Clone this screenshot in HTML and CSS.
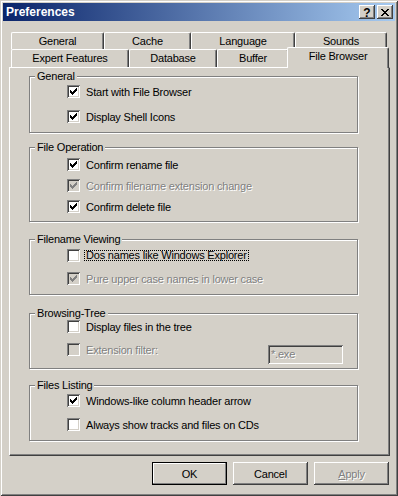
FILE: index.html
```html
<!DOCTYPE html>
<html>
<head>
<meta charset="utf-8">
<title>Preferences</title>
<link rel="stylesheet" href="styles.css">
</head>
<body>
<div class="window">
  <div class="titlebar">
    <span class="title">Preferences</span>
    <div class="caption-buttons">
      <div class="cbtn help">?</div>
      <div class="cbtn">
        <svg width="8" height="7" viewBox="0 0 8 7" shape-rendering="crispEdges"><path fill="#000" d="M0 0h2v1H0zM6 0h2v1H6zM1 1h2v1H1zM5 1h2v1H5zM2 2h4v1H2zM3 3h2v1H3zM2 4h4v1H2zM1 5h2v1H1zM5 5h2v1H5zM0 6h2v1H0zM6 6h2v1H6z"/></svg>
      </div>
    </div>
  </div>

  <div class="content">
    <div class="tabs">
      <div class="tab-row back">
        <div class="tab t-general">General</div>
        <div class="tab t-cache">Cache</div>
        <div class="tab t-language">Language</div>
        <div class="tab t-sounds">Sounds</div>
      </div>
      <div class="tab-row front">
        <div class="tab t-expert">Expert Features</div>
        <div class="tab t-database">Database</div>
        <div class="tab t-buffer">Buffer</div>
        <div class="tab t-browser selected">File Browser</div>
      </div>
    </div>

    <div class="panel">
      <fieldset class="group g-general">
        <legend>General</legend>
        <div class="row"><span class="cb"><svg class="check" width="7" height="7" viewBox="0 0 7 7" shape-rendering="crispEdges"><path d="M0 2h1v3H0zM1 3h1v3H1zM2 4h1v3H2zM3 3h1v3H3zM4 2h1v3H4zM5 1h1v3H5zM6 0h1v3H6z"/></svg></span><span class="label">Start with File Browser</span></div>
        <div class="row"><span class="cb"><svg class="check" width="7" height="7" viewBox="0 0 7 7" shape-rendering="crispEdges"><path d="M0 2h1v3H0zM1 3h1v3H1zM2 4h1v3H2zM3 3h1v3H3zM4 2h1v3H4zM5 1h1v3H5zM6 0h1v3H6z"/></svg></span><span class="label">Display Shell Icons</span></div>
      </fieldset>

      <fieldset class="group g-fileop">
        <legend>File Operation</legend>
        <div class="row"><span class="cb"><svg class="check" width="7" height="7" viewBox="0 0 7 7" shape-rendering="crispEdges"><path d="M0 2h1v3H0zM1 3h1v3H1zM2 4h1v3H2zM3 3h1v3H3zM4 2h1v3H4zM5 1h1v3H5zM6 0h1v3H6z"/></svg></span><span class="label">Confirm rename file</span></div>
        <div class="row disabled"><span class="cb"><svg class="check" width="7" height="7" viewBox="0 0 7 7" shape-rendering="crispEdges"><path d="M0 2h1v3H0zM1 3h1v3H1zM2 4h1v3H2zM3 3h1v3H3zM4 2h1v3H4zM5 1h1v3H5zM6 0h1v3H6z"/></svg></span><span class="label">Confirm filename extension change</span></div>
        <div class="row"><span class="cb"><svg class="check" width="7" height="7" viewBox="0 0 7 7" shape-rendering="crispEdges"><path d="M0 2h1v3H0zM1 3h1v3H1zM2 4h1v3H2zM3 3h1v3H3zM4 2h1v3H4zM5 1h1v3H5zM6 0h1v3H6z"/></svg></span><span class="label">Confirm delete file</span></div>
      </fieldset>

      <fieldset class="group g-viewing">
        <legend>Filename Viewing</legend>
        <div class="row"><span class="cb"></span><span class="label focus">Dos names like Windows Explorer</span></div>
        <div class="row disabled"><span class="cb"><svg class="check" width="7" height="7" viewBox="0 0 7 7" shape-rendering="crispEdges"><path d="M0 2h1v3H0zM1 3h1v3H1zM2 4h1v3H2zM3 3h1v3H3zM4 2h1v3H4zM5 1h1v3H5zM6 0h1v3H6z"/></svg></span><span class="label">Pure upper case names in lower case</span></div>
      </fieldset>

      <fieldset class="group g-tree">
        <legend>Browsing-Tree</legend>
        <div class="row lift"><span class="cb"></span><span class="label">Display files in the tree</span></div>
        <div class="row disabled"><span class="cb"></span><span class="label">Extension filter:</span><span class="textbox">*.exe</span></div>
      </fieldset>

      <fieldset class="group g-listing">
        <legend>Files Listing</legend>
        <div class="row"><span class="cb"><svg class="check" width="7" height="7" viewBox="0 0 7 7" shape-rendering="crispEdges"><path d="M0 2h1v3H0zM1 3h1v3H1zM2 4h1v3H2zM3 3h1v3H3zM4 2h1v3H4zM5 1h1v3H5zM6 0h1v3H6z"/></svg></span><span class="label">Windows-like column header arrow</span></div>
        <div class="row"><span class="cb"></span><span class="label">Always show tracks and files on CDs</span></div>
      </fieldset>
    </div>

    <div class="actions">
      <div class="btn default">OK</div>
      <div class="btn">Cancel</div>
      <div class="btn disabled"><u>A</u>pply</div>
    </div>
  </div>
</div>
</body>
</html>
```

FILE: styles.css
```css
* { box-sizing: border-box; }

html, body {
  margin: 0;
  padding: 0;
}

body {
  background: #d4d0c8;
  font-family: "Liberation Sans", Arial, sans-serif;
  font-size: 11px;
  color: #000;
  letter-spacing: -0.2px;
}

.window {
  width: 398px;
  height: 496px;
  padding: 3px;
  background: #d4d0c8;
  box-shadow:
    inset 1px 1px #d4d0c8,
    inset -1px -1px #404040,
    inset 2px 2px #fff,
    inset -2px -2px #808080;
}

/* ---------- title bar ---------- */
.titlebar {
  height: 18px;
  display: flex;
  align-items: center;
  padding: 0 2px 0 3px;
  background: linear-gradient(to right, #0a246a, #a6caf0);
}

.title {
  color: #fff;
  font-weight: bold;
  font-size: 12px;
  letter-spacing: 0;
}

.caption-buttons {
  margin-left: auto;
  display: flex;
  gap: 2px;
}

.cbtn {
  width: 16px;
  height: 14px;
  display: flex;
  align-items: center;
  justify-content: center;
  background: #d4d0c8;
  box-shadow:
    inset -1px -1px #404040,
    inset 1px 1px #fff,
    inset -2px -2px #808080;
}

.cbtn.help {
  font-weight: bold;
  font-size: 12px;
  letter-spacing: 0;
  line-height: 14px;
  padding-top: 1px;
}

/* ---------- content ---------- */
.content {
  padding: 11px 4px 0 6px;
}

.tabs {
  margin-left: 2px;
}

.tab-row {
  display: flex;
}

.tab-row.back { height: 17px; }
.tab-row.front { height: 18px; }

.tab {
  flex: none;
  background: #d4d0c8;
  border-top: 1px solid #fff;
  border-left: 1px solid #fff;
  border-right: 1px solid #404040;
  border-top-left-radius: 2px;
  border-top-right-radius: 2px;
  box-shadow: inset -1px 0 #808080;
  text-align: center;
  white-space: nowrap;
}

.back .tab { height: 17px; line-height: 16px; }
.front .tab { height: 18px; line-height: 17px; }

.t-general { width: 93px; }
.t-cache { width: 87px; }
.t-language { width: 104px; }
.t-sounds { width: 92px; }
.t-expert { width: 118px; }
.t-database { width: 88px; }
.t-buffer { width: 72px; }

.front .tab.selected {
  position: relative;
  z-index: 1;
  width: 102px;
  height: 21px;
  margin-top: -2px;
  margin-left: -2px;
  line-height: 17px;
}

/* ---------- panel ---------- */
.panel {
  width: 381px;
  padding: 1px 0 14px 19px;
  border-top: 1px solid #fff;
  border-left: 1px solid #fff;
  border-right: 1px solid #404040;
  border-bottom: 1px solid #404040;
  box-shadow: inset -1px -1px #808080;
}

.group {
  --gap: 8px;
  width: 329px;
  min-width: 0;
  margin: 0;
  padding: 0 0 7px 5px;
  border: 1px solid #808080;
  box-shadow: inset 1px 1px #fff, 1px 1px #fff;
}

.group legend {
  padding: 0 2px;
  line-height: 14px;
  background: #d4d0c8;
}

.row {
  display: flex;
  align-items: center;
  height: 17px;
  margin-left: 32px;
}

.row + .row { margin-top: var(--gap); }

.g-general { --gap: 8px; padding-top: 0; padding-bottom: 7px; }
.g-fileop { --gap: 4px; margin-top: 7px; padding-top: 2px; padding-bottom: 6px; }
.g-viewing { --gap: 6px; margin-top: 10px; padding-top: 1px; padding-bottom: 7px; }
.g-tree { --gap: 6px; margin-top: 11px; padding-top: 0; padding-bottom: 10px; }
.g-listing { --gap: 7px; margin-top: 9px; padding-top: 0; padding-bottom: 7px; }

.row.lift { margin-top: -2px; }

.cb {
  flex: none;
  width: 13px;
  height: 13px;
  padding: 3px;
  background: #fff;
  box-shadow:
    inset 1px 1px #808080,
    inset -1px -1px #fff,
    inset 2px 2px #404040,
    inset -2px -2px #d4d0c8;
}

.check {
  display: block;
  fill: #000;
}

.label {
  margin-left: 6px;
  white-space: nowrap;
}

.label.focus {
  display: inline-block;
  margin-left: 4px;
  padding: 0 1px;
  line-height: 9px;
  border: 1px dotted #000;
}

.row.disabled .cb { background: #d4d0c8; }
.row.disabled .check { fill: #808080; }
.row.disabled .label {
  color: #808080;
  text-shadow: 1px 1px #fff;
}

.textbox {
  flex: none;
  align-self: flex-start;
  width: 75px;
  height: 19px;
  margin: 4px 14px 0 auto;
  padding: 2px 3px;
  line-height: 14px;
  background: #d4d0c8;
  color: #808080;
  text-shadow: 1px 1px #fff;
  box-shadow:
    inset 1px 1px #808080,
    inset -1px -1px #fff,
    inset 2px 2px #404040,
    inset -2px -2px #d4d0c8;
}

/* ---------- buttons ---------- */
.actions {
  display: flex;
  justify-content: flex-end;
  gap: 6px;
  margin-top: 6px;
  padding-right: 2px;
}

.btn {
  width: 75px;
  height: 23px;
  display: flex;
  align-items: center;
  justify-content: center;
  background: #d4d0c8;
  box-shadow:
    inset -1px -1px #404040,
    inset 1px 1px #fff,
    inset -2px -2px #808080;
}

.btn.default {
  border: 1px solid #000;
  box-shadow:
    inset -1px -1px #808080,
    inset 1px 1px #fff;
}

.btn.disabled {
  color: #808080;
  text-shadow: 1px 1px #fff;
}
```
